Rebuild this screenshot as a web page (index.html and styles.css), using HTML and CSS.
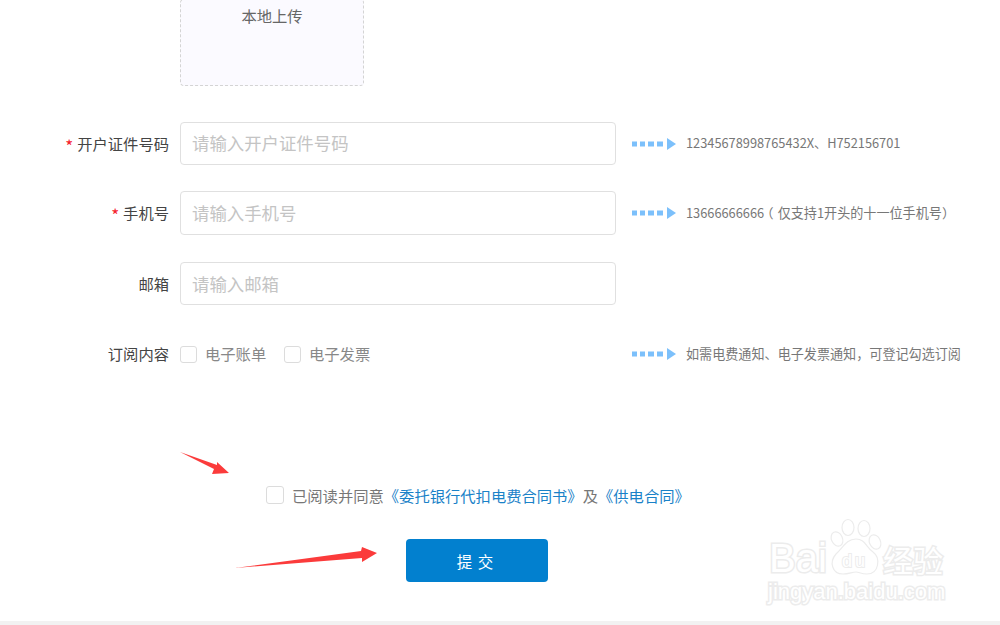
FILE: index.html
```html
<!DOCTYPE html>
<html>

<head>

	<title>订阅内容</title>

	<link rel="stylesheet" href="styles.css">
</head>

<body>

	<div class="page">

		<div class="uploadRow">
			<div class="uploadBox">本地上传</div>
		</div>

		<div class="formRow rowCert">
			<label class="rowLabel"><span class="star">*</span>开户证件号码</label>
			<input class="txtInput" type="text" placeholder="请输入开户证件号码"/>
			<svg class="hintArrow" width="46" height="14" viewBox="0 0 46 14"><use href="#dots"/></svg>
			<span class="hint"><span class="num">12345678998765432X</span>、<span class="num">H752156701</span></span>
		</div>

		<div class="formRow rowPhone">
			<label class="rowLabel"><span class="star">*</span>手机号</label>
			<input class="txtInput" type="text" placeholder="请输入手机号"/>
			<svg class="hintArrow" width="46" height="14" viewBox="0 0 46 14"><use href="#dots"/></svg>
			<span class="hint"><span class="num">13666666666</span><span class="parenOpen">（</span>仅支持<span class="num">1</span>开头的十一位手机号）</span>
		</div>

		<div class="formRow rowMail">
			<label class="rowLabel">邮箱</label>
			<input class="txtInput" type="text" placeholder="请输入邮箱"/>
		</div>

		<div class="formRow rowSub">
			<label class="rowLabel">订阅内容</label>
			<div class="checks">
				<span class="box"></span><span class="checkText">电子账单</span>
				<span class="box"></span><span class="checkText">电子发票</span>
			</div>
			<svg class="hintArrow" width="46" height="14" viewBox="0 0 46 14"><use href="#dots"/></svg>
			<span class="hint">如需电费通知、电子发票通知，可登记勾选订阅</span>
		</div>

		<div class="agreeRow">
			<span class="box"></span>
			<span class="agreeText">已阅读并同意<a class="link">《委托银行代扣电费合同书》</a>及<a class="link">《供电合同》</a></span>
		</div>

		<div class="submitRow">
			<button class="btnSubmit">提 交</button>
		</div>

		<div class="footerBar"></div>

	</div>

	<!-- shared dotted arrow -->
	<svg class="defs" width="0" height="0">
		<defs>
			<g id="dots" fill="#7cc0fb">
				<rect x="1" y="4.500" width="5" height="5"/>
				<rect x="9" y="4.500" width="5" height="5"/>
				<rect x="17" y="4.500" width="6" height="5"/>
				<rect x="26" y="4.500" width="6" height="5"/>
				<path d="M36 1 L45 7 L36 13 Z"/>
			</g>
		</defs>
	</svg>

	<!-- red annotation arrows drawn over the screenshot -->
	<svg class="marks" width="1000" height="625" viewBox="0 0 1000 625">
		<path fill="#fb3b3b" d="M180 452 L217 465 L217 462 L229 473 L212 474 L214 469 Z"/>
		<path fill="#fb3b3b" d="M235 568 L361 551 L362 547 L377 553 L362 562 L362 558 Z"/>
	</svg>

	<!-- watermark -->
	<div class="mark">
		<svg class="paw" width="56" height="62" viewBox="0 0 56 62" fill="#fff" stroke="#ececec" stroke-width="1.200">
			<ellipse cx="19" cy="9.500" rx="6" ry="8"/>
			<ellipse cx="35" cy="10.500" rx="6" ry="8"/>
			<ellipse cx="8" cy="21" rx="5.500" ry="7.500" transform="rotate(-25 8 21)"/>
			<ellipse cx="46" cy="24" rx="5.500" ry="7.500" transform="rotate(-25 46 24)"/>
			<path d="M27 21 C36 21 37 29 44 34 C52 40 50 56 38 56 C32 56 30 54 27 54 C23 54 20 56 14 56 C3 56 0 44 7 36 C14 30 17 21 27 21 Z"/>
		</svg>
		<span class="markBai">Bai</span>
		<span class="markDu">du</span>
		<span class="markCn">经验</span>
		<span class="markUrl">jingyan.baidu.com</span>
	</div>

</body>

</html>
```

FILE: styles.css
```css
* {
	box-sizing: border-box;
	outline: none;
}

html, body {
	margin: 0;
	background: #fff;
	font-family: 'Noto Sans CJK SC', 'Liberation Sans', sans-serif;
	font-size: 15.3px;
	color: #555;
	overflow: hidden;
}

.page {
	width: 1000px;
	height: 625px;
	display: flex;
	flex-direction: column;
}

.uploadRow {
	padding-left: 180px;
	height: 86px;
}

.uploadBox {
	width: 184px;
	height: 87px;
	margin-top: -1px;
	padding-top: 4px;
	background: #fbfaff;
	border: 1px dashed #d4d4d4;
	border-radius: 4px;
	text-align: center;
	line-height: 22px;
	color: #666;
}

.formRow {
	display: flex;
	align-items: center;
}
.rowCert {
	margin-top: 36px;
}
.rowPhone {
	margin-top: 26px;
}
.rowMail {
	margin-top: 27px;
}
.rowSub {
	margin-top: 28px;
	height: 42px;
}
.rowPhone .txtInput {
	height: 44px;
}
.rowCert .txtInput, .rowPhone .txtInput {
	padding-bottom: 2px;
}

.rowLabel {
	width: 169px;
	margin-right: 11px;
	padding-bottom: 2px;
	text-align: right;
	color: #444;
}

.star {
	margin-right: 4px;
	font-size: 17px;
	line-height: 1;
	vertical-align: -3px;
	color: #f5222d;
}

.txtInput {
	width: 436px;
	height: 43px;
	padding: 0 11px;
	background: #fff;
	border: 1px solid #e0e0e0;
	border-radius: 4px;
	font-family: inherit;
	font-size: 17.4px;
}
.txtInput::placeholder {
	color: #c4c4c4;
}

.hintArrow {
	margin-left: 15px;
	margin-right: 9px;
	flex: none;
}

.hint {
	padding-bottom: 2px;
	font-size: 13.1px;
	color: #777;
	white-space: nowrap;
}

.num {
	font-size: 12.8px;
}

/* half width glyph, the margins centre it like the original */
.parenOpen {
	margin-left: 3px;
	margin-right: 4px;
	font-feature-settings: "halt";
}

.checks {
	width: 436px;
	display: flex;
	align-items: center;
}

.box {
	width: 17px;
	height: 17px;
	flex: none;
	background: #fff;
	border: 1px solid #dcdcdc;
	border-radius: 3px;
}

.checkText {
	margin-left: 8px;
	margin-right: 17px;
	padding-bottom: 2px;
	color: #888;
	width: 62px;
	white-space: nowrap;
}

.agreeRow {
	display: flex;
	align-items: center;
	margin-top: 108px;
	padding-left: 266px;
	height: 24px;
}
.agreeRow .box {
	width: 18px;
	height: 18px;
}

.agreeText {
	margin-left: 8px;
	color: #777;
	white-space: nowrap;
}

.link {
	color: #1a82c8;
}

.submitRow {
	margin-top: 32px;
	padding-left: 406px;
}

.btnSubmit {
	width: 142px;
	height: 43px;
	padding-left: 3px;
	background: #0280cf;
	border: none;
	border-radius: 4px;
	font-family: inherit;
	font-size: 15.5px;
	color: #fff;
	letter-spacing: 1px;
}

.footerBar {
	margin-top: auto;
	height: 4px;
	background: #f2f2f2;
}

.defs {
	position: absolute;
}

.marks {
	position: absolute;
	left: 0;
	top: 0;
	pointer-events: none;
}

/* outlined watermark, bottom right */
.mark {
	position: absolute;
	left: 760px;
	top: 515px;
	width: 200px;
	height: 90px;
}
.mark span {
	position: absolute;
	color: #fff;
	-webkit-text-stroke: 3px #ececec;
	paint-order: stroke fill;
	white-space: nowrap;
	font-family: 'Liberation Sans', sans-serif;
}
.paw {
	position: absolute;
	left: 69px;
	top: 3px;
}
.mark .markBai {
	left: 9px;
	top: 24px;
	font-size: 40px;
	line-height: 38px;
}
.mark .markDu {
	left: 82px;
	top: 36px;
	font-size: 18px;
	line-height: 20px;
	letter-spacing: 3px;
	-webkit-text-stroke-width: 2px;
}
.mark .markCn {
	left: 123px;
	top: 28px;
	font-family: 'Noto Sans CJK SC', sans-serif;
	font-size: 30px;
	line-height: 32px;
}
.mark .markUrl {
	left: 8px;
	top: 65px;
	font-size: 22px;
	line-height: 24px;
}
```
